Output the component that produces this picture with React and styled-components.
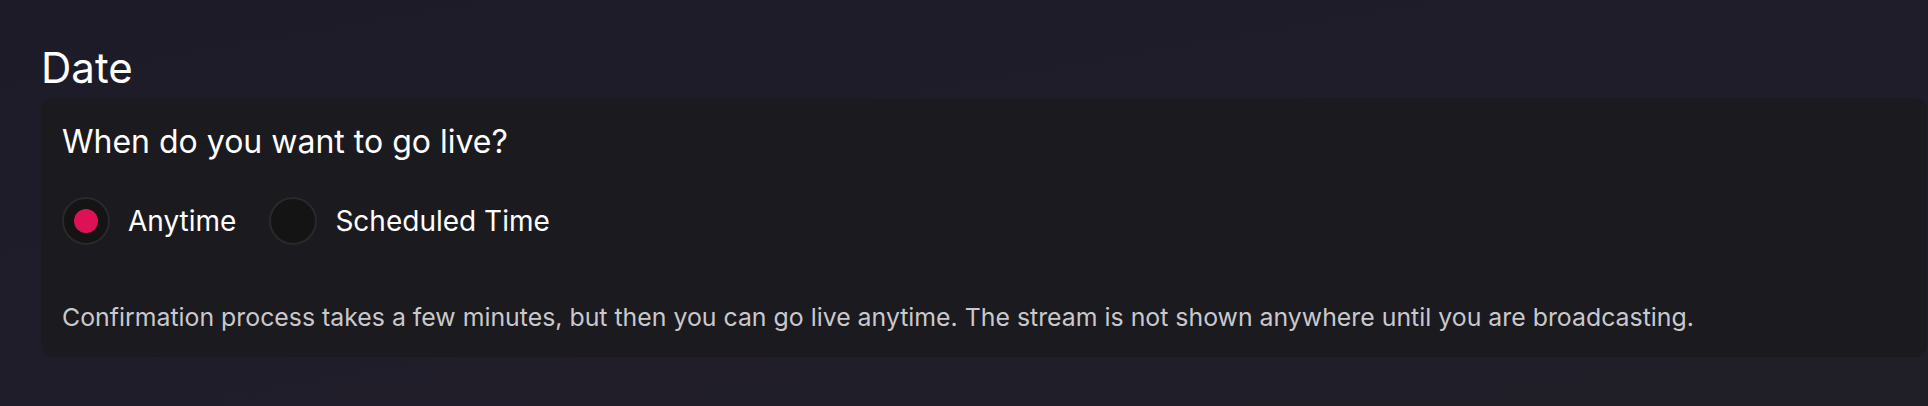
import React, { useState } from "react";
import styled, { createGlobalStyle } from "styled-components";

const GlobalStyle = createGlobalStyle`
  html, body {
    margin: 0;
    padding: 0;
  }
  body {
    background: #1f1c28;
    font-family: Inter, "Noto Sans", sans-serif;
    color: #fff;
  }
`;

const Page = styled.div`
  min-height: 406px;
  box-sizing: border-box;
  padding: 44px 1px 0 41px;
  background: linear-gradient(170deg, #1e1b29 0%, #201d2b 45%, #201f27 100%);
`;

const Heading = styled.h2`
  margin: 0;
  font-size: 42px;
  line-height: 48px;
  font-weight: 400;
`;

const Card = styled.section`
  margin-top: 6px;
  padding: 26px 21px 24px;
  background: #1b1a1f;
  border-radius: 12px;
`;

const Question = styled.h3`
  margin: 0;
  font-size: 32px;
  line-height: 36px;
  font-weight: 400;
`;

const Options = styled.div`
  display: flex;
  align-items: center;
  gap: 33px;
  margin-top: 37px;
`;

const Option = styled.label`
  display: flex;
  align-items: center;
  gap: 18px;
  cursor: pointer;
  font-size: 28px;
  line-height: 34px;
`;

const Dot = styled.span`
  box-sizing: border-box;
  width: 48px;
  height: 48px;
  border-radius: 50%;
  background: #141414;
  border: 2px solid #29292c;
  display: flex;
  align-items: center;
  justify-content: center;

  &::after {
    content: "";
    width: 24px;
    height: 24px;
    border-radius: 50%;
    background: #dd1156;
    display: ${(p) => (p.$checked ? "block" : "none")};
  }
`;

const Note = styled.p`
  margin: 56px 0 0;
  font-size: 24.85px;
  line-height: 32px;
  color: #c9c8cd;
`;

const choices = ["Anytime", "Scheduled Time"];

export default function App() {
  const [picked, setPicked] = useState("Anytime");
  return (
    <>
      <GlobalStyle />
      <Page>
        <Heading>Date</Heading>
        <Card>
          <Question>When do you want to go live?</Question>
          <Options>
            {choices.map((c) => (
              <Option key={c} onClick={() => setPicked(c)}>
                <Dot $checked={picked === c} />
                {c}
              </Option>
            ))}
          </Options>
          <Note>
            Confirmation process takes a few minutes, but then you can go live
            anytime. The stream is not shown anywhere until you are
            broadcasting.
          </Note>
        </Card>
      </Page>
    </>
  );
}
